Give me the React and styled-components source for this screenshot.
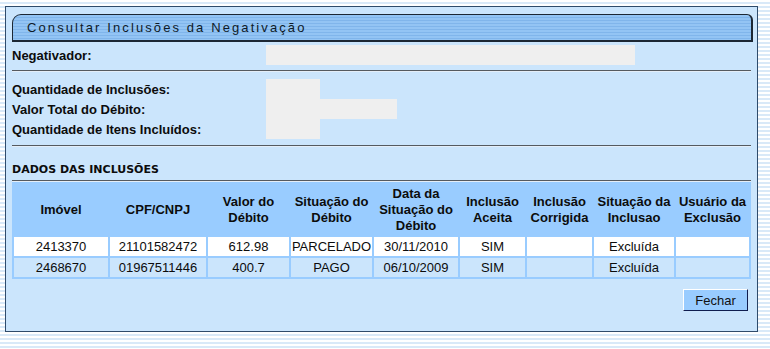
import React from "react";
import styled, { createGlobalStyle } from "styled-components";

const GlobalStyle = createGlobalStyle`
  html, body {
    margin: 0;
    padding: 0;
  }
  body {
    width: 770px;
    height: 349px;
    overflow: hidden;
    font-family: "Liberation Sans", Arial, sans-serif;
    background: repeating-linear-gradient(
      to bottom,
      #ffffff 0px,
      #ffffff 2px,
      #d9e9f8 2px,
      #d9e9f8 4px
    );
  }
`;

const Panel = styled.div`
  box-sizing: border-box;
  margin: 6px 0 0 5px;
  width: 753px;
  height: 326px;
  border: 1px solid #2f4b6b;
  background: #cbe5fc;
  padding: 7px 5px 0 6px;
  display: flex;
  flex-direction: column;
`;

const TitleBar = styled.div`
  box-sizing: border-box;
  height: 28px;
  width: 741px;
  border: 1px solid #1c2734;
  border-right-width: 2px;
  border-bottom-width: 2px;
  border-radius: 9px 6px 0 0;
  background: repeating-linear-gradient(
    to bottom,
    #93c4f4 0px,
    #93c4f4 2px,
    #80b5eb 2px,
    #80b5eb 3px
  );
  display: flex;
  align-items: center;
  padding-left: 14px;
  font-family: "Liberation Sans", Arial, sans-serif;
  font-size: 13px;
  letter-spacing: 2.1px;
  color: #0e1a28;
`;

const Row = styled.div`
  display: grid;
  grid-template-columns: 254px auto;
  align-items: center;
  height: 20px;
  margin-top: ${(p) => p.$top || 0}px;
`;

const Label = styled.span`
  font-size: 13px;
  font-weight: bold;
  color: #0c0c0c;
`;

const Field = styled.div`
  height: 20px;
  width: ${(p) => p.$w}px;
  background: #efefef;
`;

const Rule = styled.div`
  height: 0;
  width: 739px;
  border-top: 1px solid #555a60;
  border-bottom: 1px solid #e4eef8;
  margin-top: ${(p) => p.$top || 0}px;
`;

const SectionTitle = styled.div`
  font-family: "DejaVu Sans", Verdana, sans-serif;
  font-size: 11px;
  font-weight: bold;
  color: #0c0c0c;
  margin-top: 16px;
  height: 13px;
  line-height: 13px;
`;

const Table = styled.table`
  width: 739px;
  border-collapse: separate;
  border-spacing: 2px;
  background: #99ccff;
  font-size: 13px;
  color: #0c0c0c;
  table-layout: fixed;
`;

const Th = styled.th`
  padding: 0;
  height: 51px;
  font-weight: bold;
  line-height: 16px;
  text-align: center;
  vertical-align: middle;
`;

const Td = styled.td`
  padding: 0;
  height: 19px;
  line-height: 19px;
  text-align: center;
  white-space: nowrap;
  background: ${(p) => (p.$alt ? "#cbe5fc" : "#ffffff")};
`;

const Footer = styled.div`
  display: flex;
  justify-content: flex-end;
  padding-right: 4px;
  margin-top: 10px;
`;

const Button = styled.button`
  box-sizing: border-box;
  width: 65px;
  height: 22px;
  background: #99ccff;
  border: 1px solid;
  border-color: #ffffff #0f1d4f #0f1d4f #ffffff;
  font-family: "Liberation Sans", Arial, sans-serif;
  font-size: 13px;
  color: #111;
  padding: 0;
`;

const columns = [
  { w: 94, label: ["Imóvel"] },
  { w: 96, label: ["CPF/CNPJ"] },
  { w: 81, label: ["Valor do", "Débito"] },
  { w: 81, label: ["Situação do", "Débito"] },
  { w: 84, label: ["Data da", "Situação do", "Débito"] },
  { w: 65, label: ["Inclusão", "Aceita"] },
  { w: 65, label: ["Inclusão", "Corrigida"] },
  { w: 80, label: ["Situação da", "Inclusao"] },
  { w: 73, label: ["Usuário da", "Exclusão"] },
];

const rows = [
  ["2413370", "21101582472", "612.98", "PARCELADO", "30/11/2010", "SIM", "", "Excluída", ""],
  ["2468670", "01967511446", "400.7", "PAGO", "06/10/2009", "SIM", "", "Excluída", ""],
];

const App = () => {
  return (
    <>
      <GlobalStyle />
      <Panel>
        <TitleBar>Consultar Inclusões da Negativação</TitleBar>
        <Row $top={3}>
          <Label>Negativador:</Label>
          <Field $w={369} />
        </Row>
        <Rule $top={5} />
        <Row $top={7}>
          <Label>Quantidade de Inclusões:</Label>
          <Field $w={54} />
        </Row>
        <Row>
          <Label>Valor Total do Débito:</Label>
          <Field $w={131} />
        </Row>
        <Row>
          <Label>Quantidade de Itens Incluídos:</Label>
          <Field $w={54} />
        </Row>
        <Rule $top={6} />
        <SectionTitle>DADOS DAS INCLUSÕES</SectionTitle>
        <Rule $top={4} />
        <Table>
          <colgroup>
            {columns.map((c, i) => (
              <col key={i} style={{ width: c.w }} />
            ))}
          </colgroup>
          <thead>
            <tr>
              {columns.map((c, i) => (
                <Th key={i}>
                  {c.label.map((l, j) => (
                    <div key={j}>{l}</div>
                  ))}
                </Th>
              ))}
            </tr>
          </thead>
          <tbody>
            {rows.map((r, i) => (
              <tr key={i}>
                {r.map((v, j) => (
                  <Td key={j} $alt={i % 2 === 1}>
                    {v}
                  </Td>
                ))}
              </tr>
            ))}
          </tbody>
        </Table>
        <Footer>
          <Button>Fechar</Button>
        </Footer>
      </Panel>
    </>
  );
};

export default App;
